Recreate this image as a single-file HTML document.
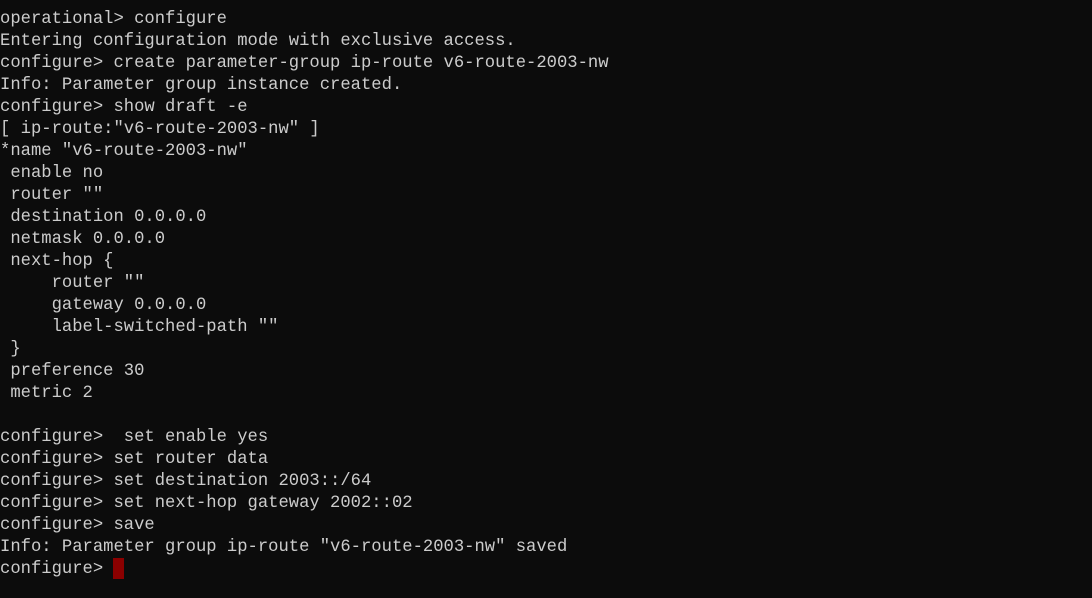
<!DOCTYPE html>
<html><head><meta charset="utf-8"><style>
html,body{margin:0;padding:0;background:#0c0c0c;width:1092px;height:598px;overflow:hidden}
pre{margin:0;position:absolute;left:0;top:9px;font-family:"Liberation Mono",monospace;font-size:17.2px;line-height:22px;color:#cccccc;white-space:pre}
.c{display:inline-block;width:11px;height:21px;background:#8b0000;vertical-align:top;margin-top:-1px}
</style></head><body><pre>operational&gt; configure
Entering configuration mode with exclusive access.
configure&gt; create parameter-group ip-route v6-route-2003-nw
Info: Parameter group instance created.
configure&gt; show draft -e
[ ip-route:"v6-route-2003-nw" ]
*name "v6-route-2003-nw"
 enable no
 router ""
 destination 0.0.0.0
 netmask 0.0.0.0
 next-hop {
     router ""
     gateway 0.0.0.0
     label-switched-path ""
 }
 preference 30
 metric 2

configure&gt;  set enable yes
configure&gt; set router data
configure&gt; set destination 2003::/64
configure&gt; set next-hop gateway 2002::02
configure&gt; save
Info: Parameter group ip-route "v6-route-2003-nw" saved
configure&gt; <span class="c"></span></pre></body></html>
